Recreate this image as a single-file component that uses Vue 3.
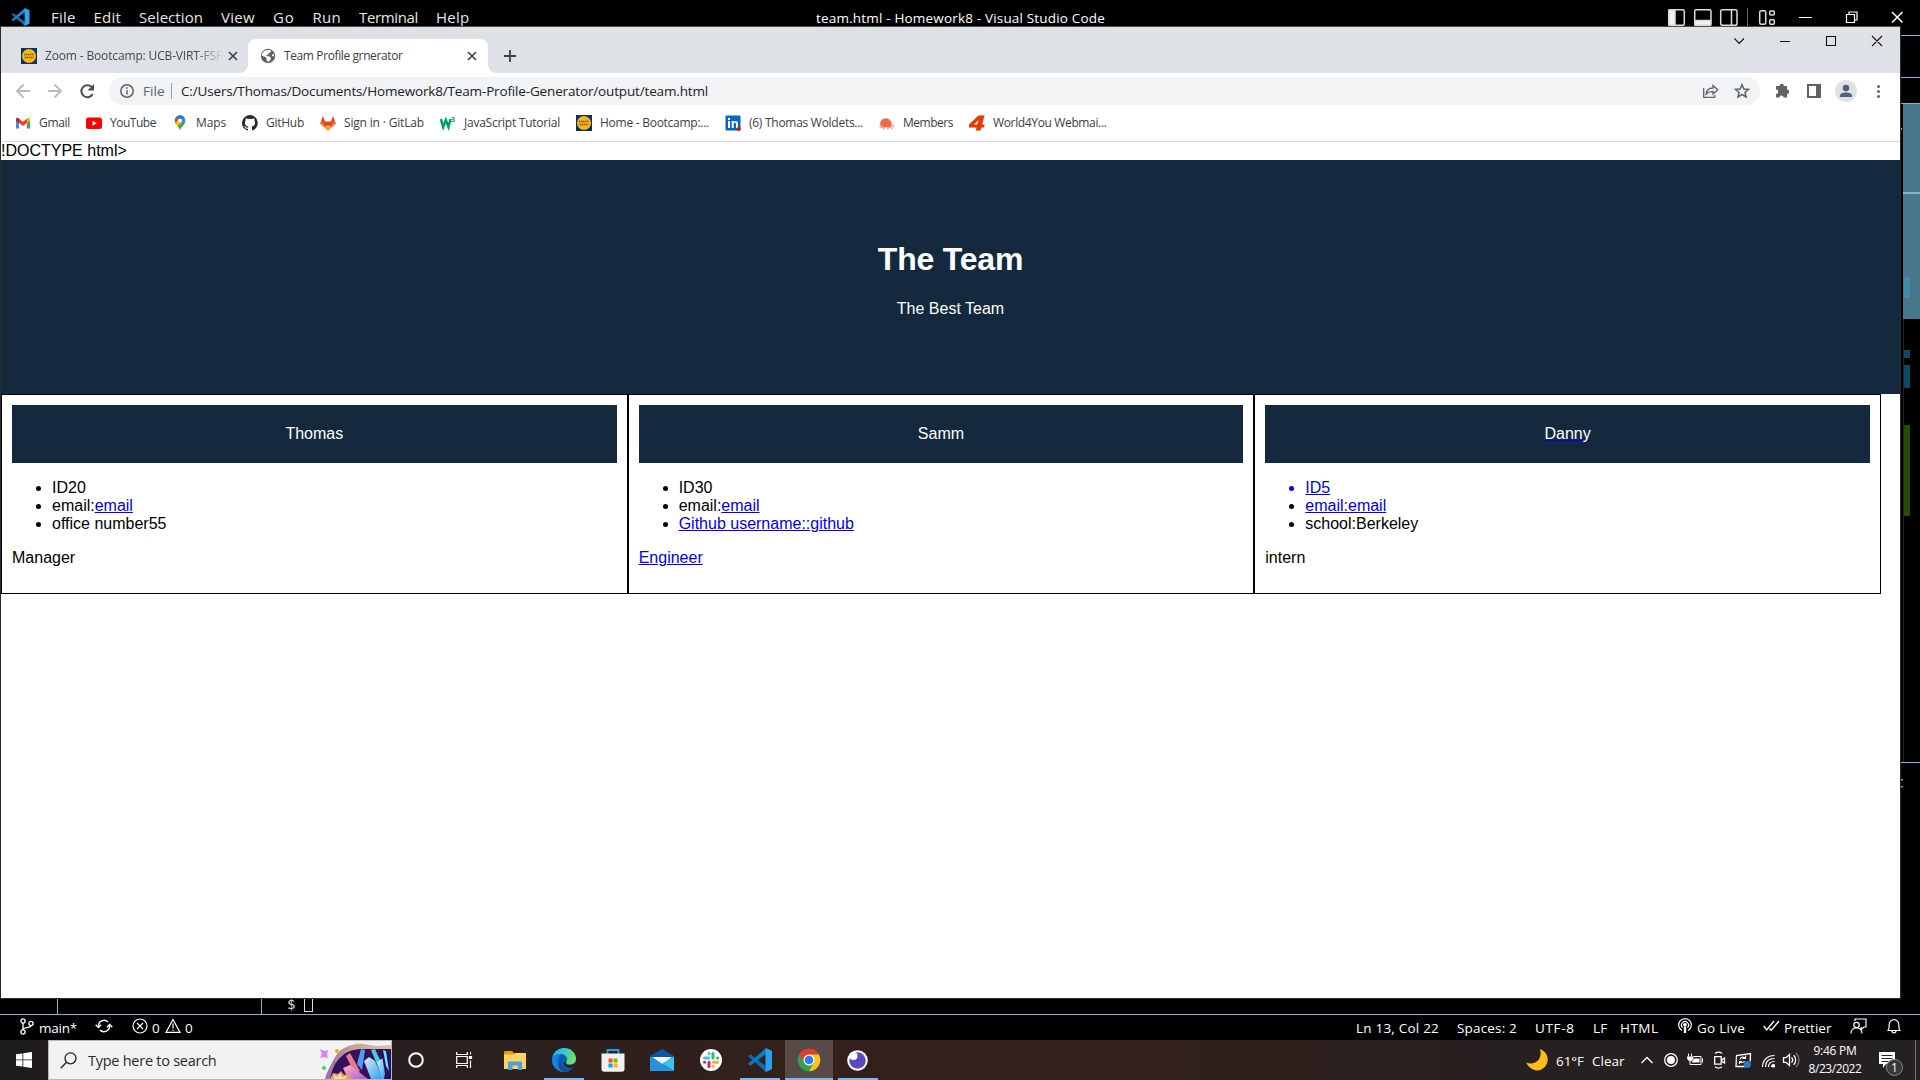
<script setup>
// Tightens or loosens tracking so a label occupies the given width in pixels.
const vFit = {
  mounted(el, { value }) {
    const range = document.createRange()
    range.selectNodeContents(el)
    const natural = range.getBoundingClientRect().width
    el.style.letterSpacing = (value - natural) / el.textContent.length + 'px'
  },
}

const menu = [
  ['File', 24.5], ['Edit', 27.5], ['Selection', 64], ['View', 34],
  ['Go', 21.5], ['Run', 28.5], ['Terminal', 59], ['Help', 33.5],
]

const bookmarks = [
  { icon: 'gmail', label: 'Gmail', w: 31 },
  { icon: 'youtube', label: 'YouTube', w: 46 },
  { icon: 'maps', label: 'Maps', w: 30 },
  { icon: 'github', label: 'GitHub', w: 38 },
  { icon: 'gitlab', label: 'Sign in · GitLab', w: 80 },
  { icon: 'w3', label: 'JavaScript Tutorial', w: 96 },
  { icon: 'camp', label: 'Home - Bootcamp:...', w: 109 },
  { icon: 'linkedin', label: '(6) Thomas Woldets...', w: 114 },
  { icon: 'members', label: 'Members', w: 50 },
  { icon: 'four', label: 'World4You Webmai...', w: 113.5 },
]
</script>

<template>
  <div class="desktop">
    <div class="code">
      <header class="titlebar">
        <svg class="code-logo" viewBox="0 0 24 24">
          <path fill="#0f6fb5" d="M0 8.200 2 6.500 18 18.300V24z" />
          <path fill="#1a86d0" d="M0 15.800 2 17.500 18 5.700V0z" />
          <path fill="#2ca5f1" d="M17.500 0 24 3v18l-6.500 3z" />
        </svg>
        <nav class="menu">
          <span v-for="m in menu" :key="m[0]" v-fit="m[1]">{{ m[0] }}</span>
        </nav>
        <span v-fit="289" class="code-title">team.html - Homework8 - Visual Studio Code</span>
        <svg class="code-controls" width="240" height="20" viewBox="1665 7 240 20" fill="none" stroke="#dcdcdc" stroke-width="1.500">
          <rect x="1668.700" y="9.700" width="15.600" height="15.600" rx="1.500" /><path fill="#f2f2f2" d="M1669 10h6v15h-6z" />
          <rect x="1694.700" y="9.700" width="16.300" height="15.600" rx="1.500" /><path fill="#f2f2f2" d="M1695 20.500h15.500v4.500H1695z" />
          <rect x="1720.700" y="9.700" width="16.300" height="15.600" rx="1.500" /><path d="M1731.500 10v15" />
          <path stroke="#666" stroke-width="1" d="M1747.500 8v18" />
          <rect x="1759.700" y="10.700" width="6" height="13.500" rx="1.500" />
          <rect x="1769.700" y="11" width="4.600" height="4" rx="1" /><rect x="1769.700" y="19.700" width="4.600" height="4.500" rx="1" />
          <path stroke="#fff" stroke-width="1" d="M1799 17.500h13" />
          <path stroke="#fff" stroke-width="1.200" d="M1846.500 14.500h8v8h-8zM1849 14v-2h8v8h-2" />
          <path stroke="#fff" stroke-width="1.500" d="m1892 12 10.500 10.500m0-10.500L1892 22.500" />
        </svg>
      </header>
      <svg class="edge" width="20" height="989" viewBox="1900 26 20 989">
        <path fill="#47788a" d="M1903 104h17v215h-17z" />
        <path fill="#6fb9d6" d="M1900 35h20v1h-20zM1900 77h20v1h-20zM1900 103h20v1h-20zM1900 762h20v1h-20z" />
        <path fill="#86b5c8" d="M1903 192h17v2h-17z" />
        <path fill="#438aa5" d="M1904 277h6v21h-6z" />
        <path fill="#0c4a63" d="M1904 350h6v8h-6zM1904 365h6v23h-6z" />
        <path fill="#2b4a06" d="M1904 425h6v91h-6z" />
        <path fill="#222" d="M1903 319h1v443h-1z" />
        <path fill="#999" d="M1901 779h2v1.500h-2zM1901 786h2v1.500h-2zM1901 128h1v2h-1z" />
      </svg>
      <div class="terminal">
        <i class="gutter"></i><i class="panel"></i><span class="prompt">$</span><i class="cursor"></i>
      </div>
      <footer class="status">
        <svg class="s-branch" width="14" height="17" viewBox="0 0 14 17" fill="none" stroke="#fff" stroke-width="1.300"><circle cx="3" cy="3" r="2.100" /><circle cx="3" cy="14" r="2.100" /><circle cx="11" cy="5.500" r="2.100" /><path d="M3 5v7M11 7.600c0 3-8 1-8 4" /></svg>
        <span v-fit="38" class="s-main">main*</span>
        <svg class="s-sync" width="18" height="16" viewBox="0 0 18 16" fill="none" stroke="#fff" stroke-width="1.400"><path d="M3.500 8.500A5.600 5.600 0 0 1 13 4M14.500 7.500A5.600 5.600 0 0 1 5 12" /><path d="m.7 6.700 2.800 2.800 2.600-2.800M11.900 9.300l2.700-2.800 2.700 2.800" /></svg>
        <svg class="s-err" width="16" height="16" viewBox="0 0 16 16" fill="none" stroke="#fff" stroke-width="1.200"><circle cx="8" cy="8" r="7" /><path d="m5 5 6 6m0-6-6 6" /></svg>
        <span class="s-zero">0</span>
        <svg class="s-warn" width="16" height="16" viewBox="0 0 16 16" fill="none" stroke="#fff" stroke-width="1.200"><path d="M8 1.500 15 14.400H1zM8 5.500v5M8 11.700v1.300" /></svg>
        <span class="s-zero">0</span>
        <span v-fit="83" class="s-pos">Ln 13, Col 22</span>
        <span v-fit="60" class="s-spaces">Spaces: 2</span>
        <span v-fit="39.500" class="s-utf">UTF-8</span>
        <span v-fit="14.500" class="s-lf">LF</span>
        <span v-fit="38.500" class="s-html">HTML</span>
        <svg class="s-live" width="14" height="16" viewBox="0 0 14 16" fill="none" stroke="#fff" stroke-width="1.200"><path d="M4 12.500a6.300 6.300 0 1 1 6 0M4.500 9.500a3.500 3.500 0 1 1 5 0" /><circle cx="7" cy="6.800" r="1.300" fill="#fff" /><path stroke-width="2.400" d="M7 9v6" /></svg>
        <span v-fit="48" class="s-golive">Go Live</span>
        <svg class="s-check" width="17" height="12" viewBox="0 0 17 12" fill="none" stroke="#fff" stroke-width="1.300"><path d="m.7 6 3 4L11 1M6.500 8.500l1.700 1.700L16 1" /></svg>
        <span v-fit="47.500" class="s-pretty">Prettier</span>
        <svg class="s-feed" width="17" height="16" viewBox="0 0 17 16" fill="none" stroke="#fff" stroke-width="1.200"><path d="M5 3V1h11v8h-2l-3 2.500V9" /><circle cx="6.500" cy="7" r="2.700" /><path d="M1 15.500c0-7.500 11-7.500 11 0" /></svg>
        <svg class="s-bell" width="14" height="16" viewBox="0 0 14 16" fill="none" stroke="#fff" stroke-width="1.200"><path d="M1 12.500c1.500-2 1-3.500 1.200-6a4.800 4.800 0 0 1 9.600 0c.2 2.500-.3 4 1.200 6zM5 13c0 2.500 4 2.500 4 0" /></svg>
      </footer>
    </div>

    <section class="browser">
      <div class="tabs">
        <div class="tab">
          <svg class="fav" width="16" height="16" viewBox="0 0 16 16"><path fill="#0a3262" d="M0 0h16v16H0z" /><circle cx="8" cy="8" r="7" fill="#fdb515" /><path stroke="#7a5a1c" stroke-width="1.600" stroke-dasharray="1.500 .5" d="M3 6.500h10M3.500 9.500h9" /></svg>
          <span class="tab-text faded"><span v-fit="177">Zoom - Bootcamp: UCB-VIRT-FSF</span></span>
          <svg class="x" width="10" height="10" viewBox="0 0 10 10"><path d="m1 1 8 8m0-8L1 9" /></svg>
        </div>
        <div class="tab active">
          <svg class="fav" width="16" height="16" viewBox="0 0 16 16"><circle cx="8" cy="8" r="7.200" fill="#5f6368" /><path fill="#fff" d="M6 2.300 11 2l-.5 2.500L8.500 5v1.500l-2 .5v1l3 .5 1.500 1.500-1 2.500-2 1.500-1.500-2V9.500L4 8.500 1.800 7.500C2 5 3.500 3 6 2.300zM12 6l2 .5v2l-1.700-.5z" /></svg>
          <span v-fit="118.500" class="tab-text">Team Profile grnerator</span>
          <svg class="x" width="10" height="10" viewBox="0 0 10 10"><path d="m1 1 8 8m0-8L1 9" /></svg>
        </div>
        <svg class="plus" width="14" height="14" viewBox="0 0 14 14"><path d="M7 1v12M1 7h12" stroke="#3c4043" stroke-width="1.800" /></svg>
        <svg class="win-controls" width="150" height="14" viewBox="1733 34 150 14" fill="none" stroke="#111" stroke-width="1.100">
          <path d="m1734.500 38.500 4.700 5 4.700-5M1780 41.500h10M1826.500 36.500h9v9h-9zM1872 36l10 10m0-10-10 10" />
        </svg>
      </div>

      <div class="toolbar">
        <svg class="nav" width="82" height="18" viewBox="14 82 82 18" fill="none" stroke-width="1.800">
          <path stroke="#b9bbbe" d="M30 91H17m6.500-6.500L17 91l6.500 6.500M48 91h13m-6.500-6.500L61 91l-6.500 6.500" />
          <path stroke="#4a4d51" stroke-width="2" d="M92.700 94a6 6 0 1 1-1.300-7.300l1.200 1.300" /><path fill="#4a4d51" d="M94 84v6.500h-6.500z" />
        </svg>
        <div class="omnibox">
          <svg class="info" width="14" height="14" viewBox="0 0 14 14" fill="none" stroke="#5f6368" stroke-width="1.500"><circle cx="7" cy="7" r="6.200" /><path d="M7 6.200v4.300M7 3.300v1.500" /></svg>
          <span v-fit="21.500" class="scheme">File</span>
          <i class="bar"></i>
          <span v-fit="527" class="url">C:/Users/Thomas/Documents/Homework8/Team-Profile-Generator/output/team.html</span>
          <svg class="page-actions" width="48" height="18" viewBox="1702 82 48 18" fill="none" stroke="#5f6368" stroke-width="1.300">
            <path d="M1703.700 88v9.400h11v-2.500M1706 94c.5-4 3-6 7-6v-2.500l4.700 4.300-4.700 4.200v-2.600c-3 0-5 .6-7 2.600z" />
            <path stroke-width="1.500" d="m1742 84.700 1.900 4.300 4.600.4-3.500 3 1.100 4.600-4.100-2.500-4.100 2.500 1.100-4.600-3.500-3 4.600-.4z" />
          </svg>
        </div>
        <svg class="extras" width="108" height="24" viewBox="1774 79 108 24">
          <path fill="#5f6368" d="M1776 86h3.500a2.200 2.200 0 1 1 4.400 0h3.100v3.500a2.200 2.200 0 1 1 0 4.400v3.600h-3.500a2 2 0 0 0-4.100 0H1776V94a2 2 0 0 0 0-4.400z" />
          <path fill="none" stroke="#5f6368" stroke-width="2" d="M1808 85h12v12h-12z" /><path fill="#5f6368" d="M1816 85h4v12h-4z" />
          <circle cx="1846" cy="91" r="11" fill="#dee1e6" /><circle cx="1846" cy="88" r="3.300" fill="#53607a" /><path fill="#53607a" d="M1840 97v-1.500c0-4 12-4 12 0V97z" />
          <g fill="#5f6368"><circle cx="1878.500" cy="86.500" r="1.500" /><circle cx="1878.500" cy="91.500" r="1.500" /><circle cx="1878.500" cy="96.500" r="1.500" /></g>
        </svg>
      </div>

      <div class="bookmarks">
        <span v-for="b in bookmarks" :key="b.icon" class="mark">
          <svg width="16" height="16" viewBox="0 0 16 16">
            <g v-if="b.icon === 'gmail'"><path fill="#4285f4" d="M1 4v9.500h3V7z" /><path fill="#34a853" d="M15 4v9.500h-3V7z" /><path fill="#ea4335" d="m4 3.500 4 3.200 4-3.200V8l-4 3-4-3z" /><path fill="#c5221f" d="M1 4.500C1 2 3 2.500 4 3.500V8L1 5.800z" /><path fill="#fbbc04" d="M15 4.500c0-2.500-2-2-3-1V8l3-2.200z" /></g>
            <g v-else-if="b.icon === 'youtube'"><rect y="2.500" width="16" height="11.500" rx="2.500" fill="#f00" /><path fill="#fff" d="m6.500 5.700 4.300 2.500-4.300 2.500z" /></g>
            <g v-else-if="b.icon === 'maps'"><path fill="#34a853" d="M8 16c0-4 5.300-5.500 5.300-10.500L3.500 8C5 11 7.500 12 8 16z" /><path fill="#4285f4" d="M8 .3c3 0 5.300 2.200 5.300 5.200L9 9z" /><path fill="#1a73e8" d="M8 .3 12 2 6 8 3 4c.7-2.300 2.700-3.700 5-3.700z" /><path fill="#ea4335" d="M4 2.200 7 5 3.600 8.500C2.300 6 2.700 3.500 4 2.200z" /><path fill="#fbbc04" d="m3.500 8 3-3.500L10 7l-4.500 4.500z" /><circle cx="8" cy="5.500" r="2" fill="#fff" /></g>
            <path v-else-if="b.icon === 'github'" fill="#24292f" d="M8 0a8 8 0 0 0-2.500 15.600c.4.100.5-.2.500-.4v-1.500c-2.200.5-2.700-1-2.700-1-.4-.9-.9-1.200-.9-1.200-.7-.5.100-.5.100-.5.800.1 1.200.8 1.200.8.700 1.300 1.900.9 2.300.7.100-.5.300-.9.500-1.100-1.800-.2-3.600-.9-3.600-4 0-.9.300-1.600.8-2.100-.1-.2-.4-1 .1-2.100 0 0 .7-.2 2.200.8a7.500 7.500 0 0 1 4 0c1.500-1 2.200-.8 2.200-.8.400 1.100.2 1.900.1 2.100.5.600.8 1.300.8 2.100 0 3.100-1.900 3.800-3.700 4 .3.300.6.800.6 1.500v2.200c0 .2.100.5.500.4A8 8 0 0 0 8 0z" />
            <g v-else-if="b.icon === 'gitlab'"><path fill="#e24329" d="m2.800 1 2.300 5.500h5.800L13.200 1l2.500 7.500L8 15.500.3 8.500z" /><path fill="#fc6d26" d="M.3 8.500 1.500 5 8 15.500 14.500 5l1.200 3.500L8 15.500z" /><path fill="#fca326" d="m4 12 4-2 4 2-4 3.500z" /></g>
            <g v-else-if="b.icon === 'w3'"><path fill="none" stroke="#04a06a" stroke-width="2.500" d="m.8 4 2.400 8 2.600-7L8.500 12l2-8" /><text x="11" y="7" font-size="7" font-weight="700" fill="#04a06a" font-family="Open Sans, sans-serif">3</text></g>
            <g v-else-if="b.icon === 'camp'"><path fill="#0a3262" d="M0 0h16v16H0z" /><circle cx="8" cy="8" r="7" fill="#fdb515" /><path stroke="#7a5a1c" stroke-width="1.600" stroke-dasharray="1.500 .5" d="M3 6.500h10M3.500 9.500h9" /></g>
            <g v-else-if="b.icon === 'linkedin'"><rect x=".5" y=".5" width="15" height="15" rx="1" fill="#0a66c2" /><path fill="#fff" d="M3 6h2v7H3zM3 3h2v2H3zM6.700 6h2v1c1-1.700 4.300-1.500 4.300 1.500V13h-2V9c0-2-2.300-1.600-2.300 0v4h-2z" /><circle cx="13.700" cy="14" r="2" fill="#d11124" /></g>
            <g v-else-if="b.icon === 'members'"><path fill="#ee6b47" d="M1 9a5.800 5.800 0 1 1 11.500 1L11 13l-3-1-4 1z" /><path fill="none" stroke="#f6a48d" stroke-width="1.500" d="M.5 10.500 3 12l-1.500 1M5 12l-.5 2.500M9 12v2.500M12 11l1 3M13 9.500l2 2.500" /></g>
            <text v-else x="0" y="15" textLength="15.500" lengthAdjust="spacingAndGlyphs" font-size="20" font-weight="900" font-style="italic" fill="#e23a00" stroke="#e23a00" stroke-width=".8" font-family="Liberation Sans, sans-serif">4</text>
          </svg>
          <span v-fit="b.w" :style="{ width: b.w + 'px' }">{{ b.label }}</span>
        </span>
      </div>

      <main class="page">
        <div>!DOCTYPE html&gt;</div>
        <header class="hero">
          <h1>The Team</h1>
          <p>The Best Team</p>
        </header>
        <div class="cards">
          <article class="card">
            <div class="name">Thomas</div>
            <ul><li>ID20</li><li>email:<a>email</a></li><li>office number55</li></ul>
            <p>Manager</p>
          </article>
          <article class="card">
            <div class="name">Samm</div>
            <ul><li>ID30</li><li>email:<a>email</a></li><li><a>Github username::github</a></li></ul>
            <p><a>Engineer</a></p>
          </article>
          <article class="card">
            <div class="name linked"><span>Danny</span></div>
            <ul><li class="blue"><a>ID5</a></li><li><a>email:email</a></li><li>school:Berkeley</li></ul>
            <p>intern</p>
          </article>
        </div>
      </main>
    </section>

    <footer class="taskbar">
      <div class="start"><svg width="16" height="16" viewBox="0 0 16 16" fill="#fff"><path d="m0 2.300 6.500-.9v6.100H0zM7.300 1.300 16 0v7.500H7.300zM0 8.300h6.500v6.200L0 13.700zM7.300 8.300H16V16l-8.700-1.300z" /></svg></div>
      <div class="search">
        <svg class="glass" width="17" height="17" viewBox="0 0 17 17" fill="none" stroke="#222" stroke-width="1.300"><circle cx="10.500" cy="6.300" r="5.500" /><path d="M6.500 10.300.7 16.200" /></svg>
        <span v-fit="128.500">Type here to search</span>
        <svg class="gems" width="74" height="38" viewBox="318 1041 74 38">
          <defs>
            <linearGradient id="rock" x2="1"><stop stop-color="#9a6bb0" /><stop offset=".45" stop-color="#c9a58e" /><stop offset="1" stop-color="#e0c3a0" /></linearGradient>
            <linearGradient id="ice" y2="1"><stop stop-color="#d6f1ff" /><stop offset="1" stop-color="#2d9bf0" /></linearGradient>
            <linearGradient id="pink" y2="1"><stop stop-color="#ffb0c4" /><stop offset="1" stop-color="#b05ad0" /></linearGradient>
          </defs>
          <path fill="url(#rock)" d="M326 1079c2-8 6-14 9-20 4-8 10-12 18-14 9-3 16 0 24 1l15-1v34z" />
          <path fill="#35105c" d="M331 1079c2-10 5-17 12-23 6-6 14-7 22-7l27 0v30z" />
          <path fill="#e77990" d="m347 1056 4-3 10 18-5 3z" /><path fill="#4b9ff0" d="m362 1049 4 1-3 20-5-6z" />
          <path fill="url(#pink)" d="m344 1068 7-3 18 14h-20z" /><path fill="url(#ice)" d="m365 1061 5-4 6 4 8 18h-12z" />
          <path fill="#37d6d4" d="m372 1050 4-1 9 20-3 5z" /><path fill="url(#ice)" d="m378 1062 6-4 3 8-2 13h-2z" />
          <path fill="#23106b" d="m382 1050 10 2v27h-5z" /><path fill="#70e5df" d="m384 1050 3 1 3 20-3-5z" />
          <path fill="#e8a45e" d="m331 1079 3-6 5 1 3-3 3 4 4-1 4 5z" /><path fill="#ffdba6" d="m335 1075 3 2 3-4 2 4 5-1-2 3h-11z" />
          <path fill="#e879f9" d="m321 1049 4 2 4-1-1 4 1 4-4-1-4 1 2-4z" /><circle cx="338" cy="1051" r="2" fill="#ffb000" /><circle cx="325" cy="1068" r="2" fill="#45cf72" />
        </svg>
      </div>
      <div class="cell"><svg width="18" height="18" viewBox="0 0 18 18"><circle cx="9" cy="9" r="6.800" fill="none" stroke="#fff" stroke-width="2" /></svg></div>
      <div class="cell"><svg width="17" height="16" viewBox="0 0 17 16" fill="none" stroke="#fff" stroke-width="1.200"><path d="M.7 0v2.500h10.600V0M.7 16v-2.500h10.600V16M.7 4.500h10.600v7H.7zM14.500 0v2.500M14.500 8.500V16" /><path fill="#fff" d="M13.500 4.500h2v2h-2z" /></svg></div>
      <div class="apps">
        <div class="cell"><svg width="22" height="19" viewBox="0 0 22 19"><path fill="#e2a00b" d="M0 1.500C0 .5.500 0 1.500 0H8l2 2v3H0z" /><path fill="#fdd264" d="M0 3.500h9L11 2h11v16H0z" /><path fill="#4a9fdd" d="M4 19v-7c0-1 .5-1.500 1.500-1.500h11c1 0 1.500.5 1.500 1.500v7h-4v-4.500H8.500V19z" /></svg></div>
        <div class="cell run"><svg width="24" height="24" viewBox="0 0 24 24">
          <defs><linearGradient id="e1" x2="1" y2=".3"><stop stop-color="#26a9e0" /><stop offset=".5" stop-color="#35c4d6" /><stop offset="1" stop-color="#6be060" /></linearGradient></defs>
          <circle cx="12" cy="12" r="12" fill="#0c62b8" />
          <path fill="url(#e1)" d="M.3 9.500C2 3.500 6.700 0 12 0c7 0 12 5 12 10.500 0 4-3 6-6.500 6-3 0-4-1.500-3-3 2-3.500-1-7.500-5.500-7.500C5 6 2 7.500.3 9.500z" />
          <path fill="#1782dc" d="M.3 9.500C2.500 7 6 5.500 9 6c-2 2-4 5-3.500 9 .5 4 3 7.500 6.500 9C5 24-1 18 .3 9.500z" />
          <path fill="#124f9a" d="M11 11c-4 4-1 11 8 9.500l2.500-1.500C19 23 15 24.500 11 23.800 5 21 5.500 13 11 11z" />
          <path fill="#2f211c" d="M14 14c-1 1.500.5 3 3.500 3 2.500 0 5-.8 6.500-2.700l.5 4-1.700.7c-3.800 2.500-10 .5-11.300-3-.4-1.500 1.200-2.500 2.500-2z" />
        </svg></div>
        <div class="cell"><svg width="24" height="24" viewBox="0 0 24 24"><path fill="none" stroke="#18a5e8" stroke-width="1.800" d="M6.500 7V2h11v5" /><path fill="#f1f1f1" d="M.5 5.500h23V21c0 2-1 2.700-2.700 2.700H3.200C1.500 23.700.5 23 .5 21z" /><path fill="#f25022" d="M7.500 10.500h4v4h-4z" /><path fill="#7fba00" d="M12.500 10.500h4v4h-4z" /><path fill="#00a4ef" d="M7.500 15.500h4v4h-4z" /><path fill="#ffb900" d="M12.500 15.500h4v4h-4z" /></svg></div>
        <div class="cell"><svg width="24" height="24" viewBox="0 0 24 24"><path fill="#0a56a8" d="M0 8 12 1l12 7v4H0z" /><path fill="#f3f6fa" d="M2 9h20l-9 8z" /><path fill="#1e95dc" d="M0 8.500 24 23H0z" /><path fill="#39c2f0" d="M24 8.500V23L12 15.500z" /></svg></div>
        <div class="cell"><svg width="22" height="22" viewBox="0 0 22 22"><circle cx="11" cy="11" r="11" fill="#fff" /><g stroke-width="3" stroke-linecap="round" fill="none"><path stroke="#36c5f0" d="M4.500 9h4M9 4.500h.1" /><path stroke="#2eb67d" d="M13 4.500V9M17.500 9h.1" /><path stroke="#ecb22e" d="M13.500 13.200h4M13 17.500h.1" /><path stroke="#e01e5a" d="M9 13.200v4.300M4.500 13.200h.1" /></g></svg></div>
        <div class="cell run"><svg width="24" height="24" viewBox="0 0 24 24"><path fill="#0b6cb0" d="m0 8.200 2.200-1.900L18 18v6z" /><path fill="#0a7cc6" d="M0 15.800 2.200 17.700 18 6V0z" /><path fill="#27a1ee" d="M17.500 0 24 2.800v18.400L17.500 24z" /></svg></div>
        <div class="cell run current"><svg width="24" height="24" viewBox="0 0 24 24"><circle cx="12" cy="12" r="11.200" fill="#34a04b" /><path fill="#e33b2e" d="M2.300 6.400A11.200 11.200 0 0 1 21.700 6.400L12 12 7 14.500z" /><path fill="#fcc31e" d="M21.700 6.400a11.200 11.200 0 0 1-9.700 16.800l5-8.500-5-8.300z" /><circle cx="12" cy="12" r="5.500" fill="#fff" /><circle cx="12" cy="12" r="4.300" fill="#2f7de9" /></svg></div>
        <div class="cell run last"><svg width="21" height="21" viewBox="0 0 21 21"><circle cx="10.500" cy="10.500" r="10.300" fill="#fff" /><circle cx="10.500" cy="10.500" r="8.200" fill="#5a49bd" /><circle cx="6.500" cy="6" r="4" fill="#fff" /></svg></div>
      </div>
      <div class="weather">
        <svg width="22" height="22" viewBox="0 0 22 22"><path fill="#fcbc19" d="M14 0c10 4 9.500 15 3 19.500C11 24 3 20 .3 13.500 9 17 17 10 14 0z" /></svg>
        <span v-fit="28" class="temp">61°F</span><span v-fit="32.500">Clear</span>
      </div>
      <svg class="tray" width="160" height="20" viewBox="1640 1050 160 20" fill="none" stroke="#fff" stroke-width="1.300">
        <path d="m1641.500 1063 5.500-5.500 5.500 5.500" />
        <circle cx="1671" cy="1060" r="6.300" /><circle cx="1671" cy="1060" r="3.300" fill="#fff" />
        <path stroke-width="1" d="M1693.500 1056.500h7.500v8h-11v-3.500M1702.500 1058.500v4M1688.500 1053.500v3M1691.500 1053.500v3" /><path fill="#fff" stroke="none" d="M1687 1056.500h6.500c0 3.500-1.500 4.500-3.200 4.500s-3.300-1-3.300-4.500zM1694 1058.500h5.500v4h-7.500v-1z" />
        <path d="M1714.700 1056.700h6.500v7.500h-6.500zM1721.500 1060l3-2v5l-3-2M1715 1053.500c2-1.500 5-1.500 7 0M1715 1066.800c2 1.500 5 1.500 7 0" />
        <path d="M1745 1066.500h-9l.5-11 14-2-.3 8" /><path stroke-width="1.100" d="M1740 1059.500c1-3 4-3 5.500-1M1745.500 1055.500v3h-3M1744.500 1061c-2 2.500-4 2-5 .5M1739.500 1064v-2.500h2.500" /><circle cx="1747.300" cy="1064.500" r="3.600" fill="#2f78c4" stroke="none" />
        <path stroke-width="1.200" d="M1762.500 1067c0-7 5-11.500 12-11.500M1765.500 1067c0-5.500 3.500-8.500 9-8.500M1768.500 1067c0-3.500 2-5.500 6-5.500M1771.500 1067c0-1.500 1-2.500 3-2.500" /><circle cx="1773.500" cy="1066" r="1" fill="#fff" />
        <path d="M1783.500 1057.700h2.500l3.500-3.200v11l-3.500-3.200h-2.500zM1791.500 1057.500c1.500 1.500 1.500 3.500 0 5M1793.700 1055.300c2.700 2.700 2.700 6.700 0 9.400" /><path stroke="#777" d="M1796 1053c4 4 4 10 0 14" />
      </svg>
      <div class="clock"><span v-fit="43">9:46 PM</span><span v-fit="53">8/23/2022</span></div>
      <div class="notes">
        <svg width="16" height="16" viewBox="0 0 16 16"><path fill="#fff" d="M0 0h16v12h-9l-3 4v-4H0z" /><path stroke="#2a2525" stroke-width="1.100" d="M2.500 3.500h11M2.500 6.500h11M2.500 9.500h7" /></svg>
        <span class="badge">1</span>
      </div>
      <i class="peek"></i>
    </footer>
  </div>
</template>

<style>
body { margin: 0; background: #000; overflow: hidden; }
</style>

<style scoped>
.desktop { position: relative; width: 1920px; height: 1080px; overflow: hidden; display: flex; flex-direction: column; background: #000; font-family: "Open Sans", "Noto Sans", sans-serif; }
.desktop svg, .desktop span { flex: none; }
.desktop span { white-space: nowrap; }
.code { height: 1040px; display: flex; flex-direction: column; color: #fff; }
.titlebar { height: 26px; display: flex; align-items: flex-start; overflow: hidden; }
.code-logo { width: 19px; height: 18px; margin: 8px 0 0 11px; }
.menu { display: flex; gap: 18px; width: 766px; margin-left: 21px; font-size: 15px; line-height: 20px; padding-top: 7px; }
.menu span { color: #e6e6e6; }
.code-title { width: 849px; font-size: 13.5px; line-height: 18px; padding-top: 9px; margin-left: -1px; }
.code-controls { margin-top: 7px; }
.edge { align-self: flex-end; margin-bottom: -17px; }
.terminal { height: 16px; display: flex; align-items: flex-start; border-bottom: 1px solid #6fb9d6; flex: none; }
.gutter { width: 57px; height: 16px; border-right: 1px solid #6fb9d6; }
.panel { width: 203px; height: 16px; border-right: 1px solid #6fb9d6; }
.prompt { font: 14px/16px "DejaVu Sans Mono", monospace; margin: -2px 0 0 25px; color: #ddd; }
.cursor { width: 7px; height: 18px; border: 1px solid #ddd; margin: -6px 0 0 9px; }
.status { height: 25px; flex: none; display: flex; align-items: flex-start; font-size: 13.5px; line-height: 18px; }
.status > span { margin-top: 4px; }
.status > svg { margin-top: 3px; }
.s-branch { margin-left: 20px; } .s-main { margin-left: 5px; width: 38px; }
.s-sync { margin-left: 18px; } .s-err { margin-left: 19px; }
.s-zero { margin-left: 4px; width: 8px; } .s-warn { margin-left: 5px; }
.s-pos { margin-left: 1163px; width: 83px; } .s-spaces { margin-left: 18px; width: 60px; }
.s-utf { margin-left: 18px; width: 40px; } .s-lf { margin-left: 18px; width: 14px; } .s-html { margin-left: 13px; width: 39px; }
.s-live { margin-left: 19px; } .s-golive { margin-left: 5px; width: 48px; }
.status .s-check { margin: 5px 0 0 18px; } .s-pretty { margin-left: 4px; width: 48px; }
.s-feed { margin-left: 18px; } .s-bell { margin-left: 20px; }

.browser { position: absolute; left: 0; top: 26px; width: 1899px; height: 971px; border: 1px solid #2b2b2b; border-top-color: #4d4d4d; background: #fff; display: flex; flex-direction: column; }
.tabs { height: 46px; flex: none; background: #dee1e6; display: flex; align-items: flex-end; }
.tab { height: 34px; width: 247px; display: flex; align-items: center; box-sizing: border-box; padding-left: 20px; font-size: 12px; color: #45494d; flex: none; }
.tab.active { position: relative; width: 240px; background: #fff; border-radius: 8px 8px 0 0; padding-left: 12px; color: #3c4043; }
.tab.active::before, .tab.active::after { content: ""; position: absolute; bottom: 0; width: 8px; height: 8px; }
.tab.active::before { left: -8px; background: radial-gradient(circle at 0 0, #dee1e6 7.5px, #fff 8px); }
.tab.active::after { right: -8px; background: radial-gradient(circle at 100% 0, #dee1e6 7.5px, #fff 8px); }
.fav { margin-right: 8px; }
.tab-text { width: 176px; line-height: 18px; margin-right: 7px; }
.faded { -webkit-mask-image: linear-gradient(90deg, #000 150px, transparent 179px); mask-image: linear-gradient(90deg, #000 150px, transparent 179px); }
.x path { stroke: #3c4043; stroke-width: 1.6; }
.tab.active .x { margin-left: -1px; }
.tab.active .tab-text { width: 177px; margin-right: 7px; }
.plus { margin: 0 0 10px 15px; }
.win-controls { margin: 0 17px 25px auto; }
.toolbar { height: 36px; flex: none; display: flex; align-items: center; }
.nav { margin-left: 13px; }
.omnibox { width: 1651px; height: 28px; border-radius: 14px; margin-left: 13px; background: #f1f3f4; display: flex; align-items: center; font-size: 13.5px; line-height: 18px; }
.info { margin-left: 11px; } .scheme { margin-left: 9px; width: 21px; color: #5f6368; }
.bar { width: 1px; height: 16px; background: #9aa0a6; margin: 0 9px 0 7px; }
.url { color: #202124; }
.page-actions { margin: 0 10px 0 auto; }
.extras { margin-left: 14px; }
.bookmarks { height: 32px; box-sizing: content-box; flex: none; display: flex; gap: 16px; align-items: flex-start; padding-left: 14px; border-bottom: 1px solid #d9dbde; font-size: 12px; color: #3c4043; }
.mark { display: flex; gap: 8px; align-items: center; line-height: 18px; padding-top: 5px; }
.page { flex: 1; font: 16px/18px "Liberation Sans", Arial, sans-serif; color: #000; }
.hero { background: #14293d; color: #fff; text-align: center; padding: 60px 0; height: 234px; box-sizing: border-box; display: flow-root; }
.hero h1 { font-size: 32px; line-height: 37px; margin: 21.4px 0; letter-spacing: -0.2px; }
.hero p { margin: 0; }
.cards { display: flex; }
.card { width: 33%; box-sizing: border-box; border: 1px solid #000; padding: 10px; height: 200px; flex: none; }
.name { background: #14293d; color: #fff; text-align: center; padding: 20px 0; }
.linked span { text-decoration: underline; text-decoration-color: #00e; }
.card ul { margin: 16px 0; padding-left: 40px; }
.card p { margin: 16px 0; }
.card a { color: #00e; text-decoration: underline; }
.blue { color: #00e; }

.taskbar { height: 40px; flex: none; display: flex; align-items: center; color: #fff; background: linear-gradient(90deg, #1f1c1e 0, #272020 20%, #33201b 42%, #33201b 58%, #272020 78%, #242122 100%); }
.start { width: 48px; display: flex; justify-content: center; }
.search { width: 344px; height: 40px; box-sizing: border-box; border: 1px solid #b8b8b8; background: #f2f2f2; display: flex; align-items: center; color: #2b2b2b; font-size: 14.5px; line-height: 20px; }
.search span { padding-top: 2px; }
.glass { margin: 0 11px 0 11px; }
.gems { margin-left: auto; }
.cell { width: 48px; height: 40px; display: flex; align-items: center; justify-content: center; box-sizing: border-box; }
.apps { display: flex; gap: 1px; margin-left: 3px; }
.run { background: linear-gradient(#76b9ed, #76b9ed) center bottom / 40px 2px no-repeat; }
.current { background: linear-gradient(#76b9ed, #76b9ed) center bottom / 48px 2px no-repeat, #584a46; }
.last svg { margin-left: -1px; }
.weather { display: flex; align-items: center; margin-left: 644px; font-size: 13.5px; width: 113px; }
.weather span { padding-top: 1px; }
.temp { margin: 0 8px; }
.tray { margin-left: 1px; }
.clock { width: 58px; margin-left: 6px; display: flex; flex-direction: column; align-items: center; font-size: 12px; line-height: 18px; }
.notes { position: relative; width: 16px; height: 16px; margin-left: 15px; }
.notes svg { display: block; }
.badge { position: absolute; left: 7px; top: 7px; width: 15px; height: 15px; border: 1px solid #8a8a8a; border-radius: 50%; background: #3a3737; font-size: 12px; line-height: 15px; text-align: center; }
.peek { width: 1px; height: 40px; background: #77706e; margin-left: 20px; }
</style>
